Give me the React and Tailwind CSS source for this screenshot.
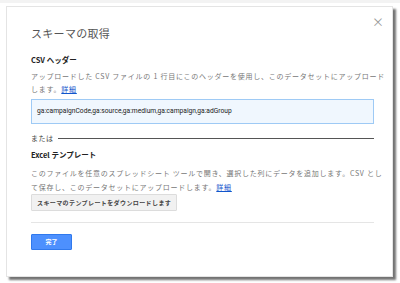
export default function App() {
  const jp = { fontFamily: '"Noto Sans CJK JP", "Noto Sans", sans-serif' };
  return (
    <div className="w-[400px] h-[283px] bg-white relative overflow-hidden" style={jp}>
      <div className="absolute left-0 top-0 w-[400px] h-[3px] bg-[#f3f3f3]" />
      <div className="ml-[6px] pt-[6px]">
        <div className="w-[387px] h-[271px] bg-white border border-[#e4e4e4] shadow-[3px_3px_2px_rgba(0,0,0,0.55)] relative pl-[24px] pr-[20px] leading-none">
          <div className="absolute right-[8px] top-[9px] text-[#999] text-[12px] leading-none">×</div>
          <div className="pt-[18px] text-[11px] leading-[16px] text-[#555] tracking-[0.3px]">スキーマの取得</div>
          <div className="mt-[13px] text-[7.5px] leading-[12px] font-bold text-[#222]">CSV ヘッダー</div>
          <div className="mt-[4px] text-[7px] leading-[13px] text-[#777] tracking-[0.75px] whitespace-nowrap">
            <div>アップロードした CSV ファイルの 1 行目にこのヘッダーを使用し、このデータセットにアップロード</div>
            <div>します。<span className="text-[#15c] underline">詳細</span></div>
          </div>
          <div className="mt-[3px] w-[343px] h-[25px] border border-[#9ecaf5] bg-[#f0f7fe] pl-[5px] pt-[6px] text-[6.7px] leading-[10px] text-[#222]" style={{ fontFamily: 'Roboto, "Liberation Sans", sans-serif' }}>
            ga:campaignCode,ga:source,ga:medium,ga:campaign,ga:adGroup
          </div>
          <div className="mt-[8px] flex items-center w-[343px] h-[12px]">
            <span className="text-[7px] leading-[12px] text-[#444] tracking-[0.5px]">または</span>
            <div className="ml-[4px] flex-1 h-[1px] bg-[#555]" />
          </div>
          <div className="mt-[5px] text-[7.5px] leading-[12px] font-bold text-[#222]">Excel テンプレート</div>
          <div className="mt-[5px] text-[7px] leading-[14px] text-[#777] tracking-[0.75px] whitespace-nowrap">
            <div>このファイルを任意のスプレッドシート ツールで開き、選択した列にデータを追加します。CSV とし</div>
            <div>て保存し、このデータセットにアップロードします。<span className="text-[#15c] underline">詳細</span></div>
          </div>
          <div className="flex w-fit items-center h-[17px] px-[5px] bg-[#f1f1f1] border border-[#dcdcdc] rounded-[1px] text-[6px] leading-none font-bold text-[#444] tracking-[0.4px]">
            スキーマのテンプレートをダウンロードします
          </div>
          <div className="mt-[11px] w-[343px] h-[1px] bg-[#e5e5e5]" />
          <div className="mt-[11px] flex items-center justify-center w-[41px] h-[16px] bg-[#4d90fe] border border-[#3079ed] rounded-[1px] text-white text-[6px] leading-none font-bold">
            完了
          </div>
        </div>
      </div>
    </div>
  );
}
